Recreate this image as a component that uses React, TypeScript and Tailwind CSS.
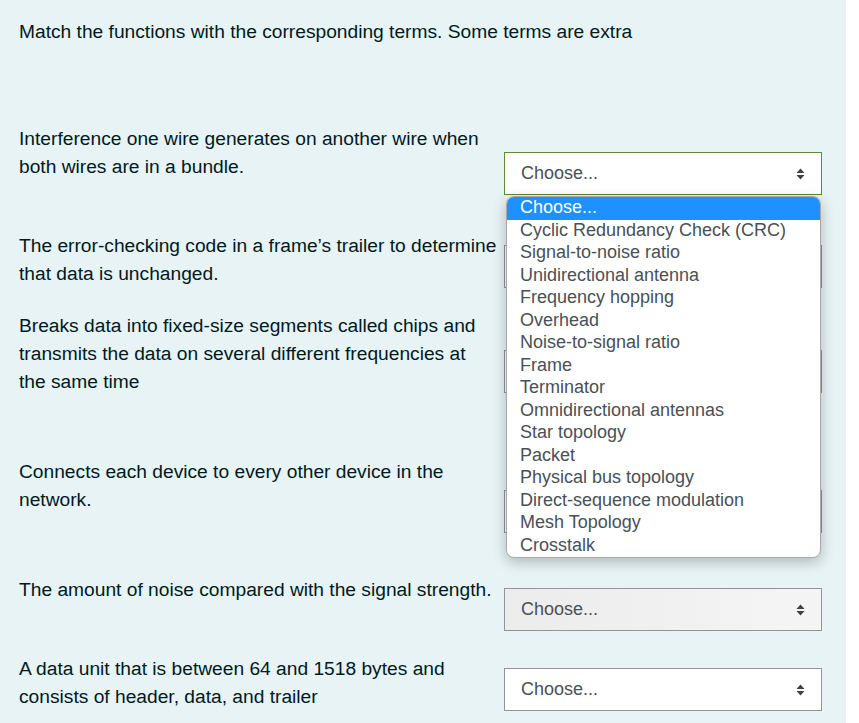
import React from 'react';

type Row = {
  lines: string[];
  rowClass: string;
  selectClass: string;
  focused?: boolean;
  hovered?: boolean;
  open?: boolean;
};

const rows: Row[] = [
  { lines: ['Interference one wire generates on another wire when', 'both wires are in a bundle.'], rowClass: 'h-[107px]', selectClass: 'mt-[27px]', focused: true, open: true },
  { lines: ['The error-checking code in a frame’s trailer to determine', 'that data is unchanged.'], rowClass: 'h-[80px]', selectClass: 'mt-[13px]' },
  { lines: ['Breaks data into fixed-size segments called chips and', 'transmits the data on several different frequencies at', 'the same time'], rowClass: 'h-[146px]', selectClass: 'mt-[38px]' },
  { lines: ['Connects each device to every other device in the', 'network.'], rowClass: 'h-[118px]', selectClass: 'mt-[32px]' },
  { lines: ['The amount of noise compared with the signal strength.'], rowClass: 'h-[79px]', selectClass: 'mt-[12px]', hovered: true },
  { lines: ['A data unit that is between 64 and 1518 bytes and', 'consists of header, data, and trailer'], rowClass: 'h-[68px]', selectClass: 'mt-[13px]' },
];

const options = [
  'Choose...',
  'Cyclic Redundancy Check (CRC)',
  'Signal-to-noise ratio',
  'Unidirectional antenna',
  'Frequency hopping',
  'Overhead',
  'Noise-to-signal ratio',
  'Frame',
  'Terminator',
  'Omnidirectional antennas',
  'Star topology',
  'Packet',
  'Physical bus topology',
  'Direct-sequence modulation',
  'Mesh Topology',
  'Crosstalk',
];

const Arrows = () => (
  <svg width="9" height="12" viewBox="0 0 9 12" fill="#3b4148">
    <path d="M4.5 0.5L8.5 5H0.5Z" />
    <path d="M4.5 11.5L8.5 7H0.5Z" />
  </svg>
);

const FakeSelect = ({ row }: { row: Row }) => {
  const border = row.focused ? 'border-[#5b8a32]' : 'border-[#8f959e]';
  const bg = row.hovered ? 'bg-gradient-to-r from-[#ececec] to-[#f5f5f5]' : 'bg-white';
  return (
    <div className={`relative w-[318px] shrink-0 ${row.selectClass}`}>
      <div className={`flex h-[43px] items-center justify-between border pl-4 pr-[16px] ${border} ${bg}`}>
        <span className="text-[18px] text-[#495057]">Choose...</span>
        <Arrows />
      </div>
      {row.open && (
        <div className="absolute left-[2px] top-[44px] z-10 w-[315px] overflow-hidden rounded-lg border border-[#a8a8a8] bg-white shadow-[0_4px_14px_rgba(0,0,0,0.25)]">
          {options.map((o, i) => (
            <div
              key={o}
              className={`h-[22.5px] pl-[13px] text-[18px] leading-[21.5px] ${i === 0 ? 'bg-[#1e90ff] text-white' : 'text-[#495057]'}`}
            >
              {o}
            </div>
          ))}
        </div>
      )}
    </div>
  );
};

export default function App() {
  return (
    <main className="flex h-[723px] w-[859px] overflow-hidden bg-white font-['Liberation_Sans',Arial,sans-serif] text-[#001a1e]">
      <div className="w-[846px] bg-[#e7f3f5] pl-[19px] pt-[18px]">
        <p className="text-[19.2px] leading-7">Match the functions with the corresponding terms. Some terms are extra</p>
        <div className="mt-[79px]">
          {rows.map((row) => (
            <div key={row.lines[0]} className={`flex items-start ${row.rowClass}`}>
              <div className="w-[485px] shrink-0 text-[19.2px] leading-7">
                {row.lines.map((l) => (
                  <p key={l} className="whitespace-nowrap">{l}</p>
                ))}
              </div>
              <FakeSelect row={row} />
            </div>
          ))}
        </div>
      </div>
    </main>
  );
}
